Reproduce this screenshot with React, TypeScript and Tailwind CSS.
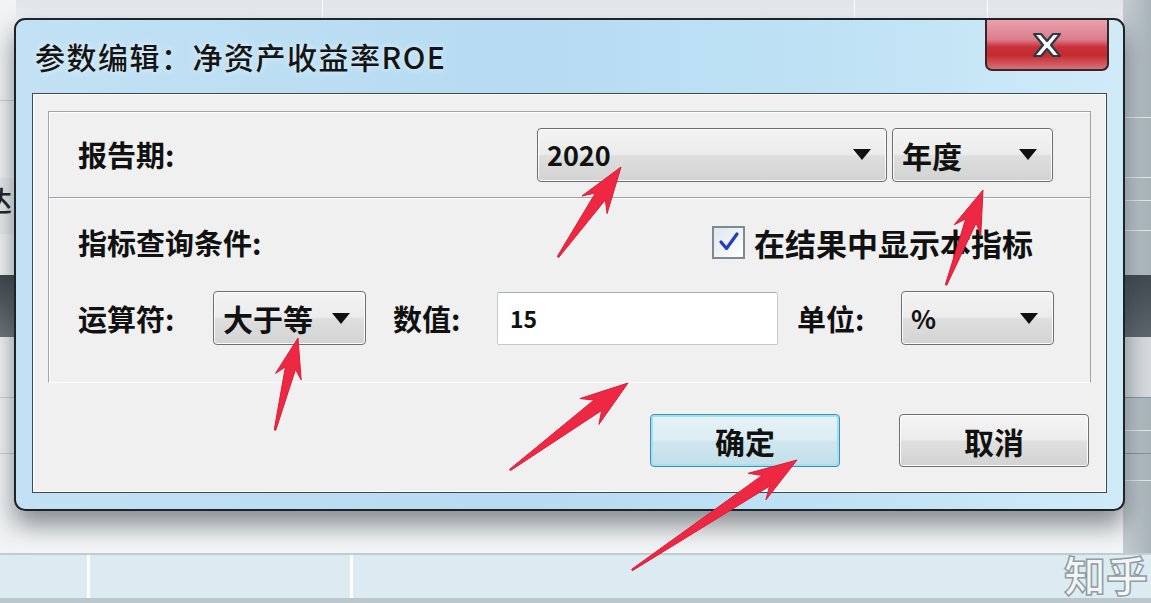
import type { ReactNode } from 'react';

const cjk = "font-['Noto_Sans_CJK_SC','Noto_Sans',sans-serif]";

// Red annotation arrows drawn over the dialog: [tipX, tipY, tailX, tailY]
const arrows: [number, number, number, number][] = [
  [621, 167, 558, 257],
  [983, 190, 946, 285],
  [298, 338, 275, 430],
  [628, 383, 510, 470],
  [797, 460, 632, 570],
];

function arrowPoints([tx, ty, ex, ey]: [number, number, number, number]): string {
  const len = Math.hypot(tx - ex, ty - ey);
  const ux = (tx - ex) / len;
  const uy = (ty - ey) / len;
  const px = -uy;
  const py = ux;
  const at = (d: number, w: number) => `${(tx - ux * d + px * w).toFixed(1)},${(ty - uy * d + py * w).toFixed(1)}`;
  const head = Math.min(48, len * 0.42);
  const barb = Math.min(16, len * 0.14);
  const neck = Math.min(6.5, len * 0.055);
  return [
    at(0, 0),
    at(head, barb),
    at(head * 0.78, neck),
    at(len, 0.8),
    at(len, -0.8),
    at(head * 0.78, -neck),
    at(head, -barb),
  ].join(' ');
}

function Caret() {
  return (
    <svg width="18" height="11" viewBox="0 0 18 11" className="shrink-0">
      <path d="M0 0 H18 L9 11 Z" fill="#111" />
    </svg>
  );
}

function Combo({ value, width, textSize = 'text-[29px]' }: { value: string; width: string; textSize?: string }) {
  return (
    <div
      className={`${width} h-[54px] shrink-0 rounded-[4px] border border-[#6f6f6f] bg-[linear-gradient(#f3f3f3_0%,#ececec_48%,#dedede_52%,#d3d3d3_100%)] shadow-[inset_0_0_0_1px_#fbfbfb] flex items-center justify-between pl-[9px] pr-[15px]`}
    >
      <span className={`${textSize} font-semibold text-[#111] leading-none`}>{value}</span>
      <Caret />
    </div>
  );
}

function Label({ children, width }: { children: ReactNode; width?: string }) {
  return <span className={`${width ?? ''} shrink-0 text-[29px] font-semibold text-[#111] leading-none`}>{children}</span>;
}

function Button({ children, primary }: { children: ReactNode; primary?: boolean }) {
  return (
    <div
      className={`w-[190px] h-[53px] rounded-[4px] border flex items-center justify-center ${
        primary
          ? 'border-[#3f8fb4] bg-[linear-gradient(#e6f3f7_0%,#dcedf3_48%,#cfe6ee_52%,#c3dfe9_100%)] shadow-[inset_0_0_0_2px_#9fe0f2]'
          : 'border-[#707070] bg-[linear-gradient(#f4f4f4_0%,#ececec_48%,#dfdfdf_52%,#d2d2d2_100%)] shadow-[inset_0_0_0_1px_#fcfcfc]'
      }`}
    >
      <span className="text-[30px] font-semibold text-[#111] leading-none">{children}</span>
    </div>
  );
}

function Backdrop() {
  return (
    <>
      {/* top strip of the app behind */}
      <div className="absolute left-0 top-0 w-full h-[20px] bg-[linear-gradient(#dfe5e8,#eef1f3)]">
        <div className="absolute left-[322px] top-0 h-full w-px bg-white" />
        <div className="absolute left-[854px] top-0 h-full w-px bg-white" />
        <div className="absolute left-[987px] top-0 h-full w-px bg-white" />
      </div>
      {/* left strip */}
      <div className="absolute left-0 top-0 w-[16px] h-[553px] bg-[#f1f3f4]">
        <div className="absolute left-0 top-[100px] w-full h-px bg-[#c9d0d4]" />
        <div className="absolute left-0 top-[178px] w-full h-[56px] bg-[#e7ebed]" />
        <span className={`absolute left-[-16px] top-[186px] text-[28px] leading-none font-medium text-[#222] ${cjk}`}>达</span>
        <div className="absolute left-0 top-[275px] w-full h-[62px] bg-[linear-gradient(#3e454a,#6d767c)]" />
        <div className="absolute left-0 top-[397px] w-full h-px bg-[#c9d0d4]" />
        <div className="absolute left-0 top-[453px] w-full h-px bg-[#c9d0d4]" />
      </div>
      {/* right strip */}
      <div className="absolute right-0 top-0 w-[28px] h-[553px] bg-[linear-gradient(90deg,#c3ccd1,#a9b4ba)]">
        <div className="absolute left-0 top-[117px] w-full h-px bg-[#e3e8ea]" />
        <div className="absolute left-0 top-[177px] w-full h-px bg-[#e3e8ea]" />
        <div className="absolute left-0 top-[200px] w-full h-px bg-[#e3e8ea]" />
        <div className="absolute left-0 top-[230px] w-full h-px bg-[#e3e8ea]" />
        <div className="absolute left-0 top-[275px] w-full h-[62px] bg-[linear-gradient(#404a50,#5d676d)]" />
        <div className="absolute left-0 top-[337px] w-full h-[60px] bg-[#d5dbde]" />
        <div className="absolute left-0 top-[397px] w-full h-px bg-[#8a959b]" />
        <div className="absolute left-0 top-[430px] w-full h-px bg-[#e3e8ea]" />
        <div className="absolute left-0 top-[453px] w-full h-px bg-[#8a959b]" />
        <div className="absolute left-0 top-[480px] w-full h-px bg-[#e3e8ea]" />
      </div>
      {/* bottom row of the table */}
      <div className="absolute left-0 top-[553px] w-full h-[45px] border-t-2 border-[#c2cdd2] bg-[#dcebf2]">
        <div className="absolute left-[87px] top-0 h-full w-[3px] bg-white" />
        <div className="absolute left-[350px] top-0 h-full w-[3px] bg-white" />
      </div>
      <div className="absolute left-0 top-[598px] w-full h-[5px] bg-[#bcc7cc]" />
      {/* watermark */}
      <span
        className={`absolute left-[1064px] top-[553px] whitespace-nowrap text-[42px] leading-none font-bold text-[#f3f5f6] [-webkit-text-stroke:1.5px_#8f9ca3] ${cjk}`}
      >
        知乎
      </span>
    </>
  );
}

export default function App() {
  return (
    <div className={`relative w-[1151px] h-[603px] overflow-hidden bg-[#f3f5f6] ${cjk}`}>
      <Backdrop />

      {/* Dialog window */}
      <div className="absolute left-[14px] top-[18px] w-[1111px] h-[493px] rounded-[11px] border-2 border-[#1d2326] bg-[linear-gradient(90deg,#c2e1f4_0%,#b6dbf2_45%,#bfe2f5_75%,#d0ebf8_100%)] shadow-[0_14px_26px_rgba(40,50,56,0.55)] flex flex-col">
        {/* Title bar */}
        <div className="relative h-[73px] shrink-0 flex items-center pl-[19px] pb-[1px]">
          <span className="text-[30px] font-medium tracking-[1.5px] text-[#151515] leading-none [text-shadow:0_0_6px_#e8f6ff]">
            参数编辑：净资产收益率ROE
          </span>
          <div className="absolute right-[14px] top-0 w-[124px] h-[51px] rounded-b-[7px] border-2 border-t-0 border-[#3b2426] bg-[linear-gradient(#eaa0ad_0%,#dc7d8b_40%,#c9303a_55%,#c62b2e_72%,#d4727b_100%)] flex items-center justify-center">
            <svg width="38" height="30" viewBox="0 0 38 30">
              <path
                d="M6 4 L13 4 L19 11 L25 4 L32 4 L23 15 L32 26 L25 26 L19 19 L13 26 L6 26 L15 15 Z"
                fill="#ffffff"
                stroke="#2b3a44"
                strokeWidth="2.2"
                strokeLinejoin="round"
              />
            </svg>
          </div>
        </div>

        {/* Client area */}
        <div className="mx-[16px] mb-[16px] flex-1 border border-[#3e4a52] bg-[#f0f0f0] shadow-[inset_0_0_0_1px_#ffffff] flex flex-col pt-[17px] px-[15px]">
          {/* Group box */}
          <div className="border border-[#9da4a8] border-b-white shadow-[inset_1px_1px_0_#ffffff] flex flex-col">
            <div className="h-[86px] flex items-center pl-[29px] pr-[37px] border-b border-[#9da4a8] shadow-[0_1px_0_#ffffff]">
              <Label>报告期:</Label>
              <div className="ml-auto flex gap-[5px]">
                <Combo value="2020" width="w-[350px]" textSize="text-[27px]" />
                <Combo value="年度" width="w-[161px]" textSize="text-[30px]" />
              </div>
            </div>
            <div className="h-[184px] flex flex-col pl-[29px] pr-[37px]">
              <div className="h-[90px] flex items-center pb-[2px]">
                <Label>指标查询条件:</Label>
                <div className="ml-auto mr-[20px] flex items-center gap-[9px]">
                  <div className="w-[33px] h-[33px] border-2 border-[#7b8a95] bg-[linear-gradient(135deg,#dfe6ee,#ffffff)] flex items-center justify-center">
                    <svg width="22" height="22" viewBox="0 0 22 22">
                      <path d="M3 11 L8.5 17.5 L19 3" fill="none" stroke="#1f3fbf" strokeWidth="3.2" strokeLinecap="round" strokeLinejoin="round" />
                    </svg>
                  </div>
                  <span className="text-[31px] font-semibold text-[#111] leading-none">在结果中显示本指标</span>
                </div>
              </div>
              <div className="h-[60px] flex items-center">
                <Label width="w-[135px]">运算符:</Label>
                <Combo value="大于等" width="w-[153px]" textSize="text-[30px]" />
                <Label width="ml-[27px] w-[104px]">数值:</Label>
                <div className="w-[281px] h-[53px] shrink-0 rounded-[2px] border border-[#c5cace] border-t-[#a9aeb3] bg-white flex items-center pl-[12px]">
                  <span className="text-[23px] font-semibold text-[#111] leading-none">15</span>
                </div>
                <Label width="ml-[19px] w-[104px]">单位:</Label>
                <Combo value="%" width="w-[153px]" textSize="text-[26px]" />
              </div>
            </div>
          </div>

          {/* Buttons */}
          <div className="mt-[31px] flex justify-end gap-[59px] pr-[2px]">
            <Button primary>确定</Button>
            <Button>取消</Button>
          </div>
        </div>
      </div>

      {/* Annotation arrows */}
      <svg className="absolute left-0 top-0 pointer-events-none" width="1151" height="603" viewBox="0 0 1151 603">
        {arrows.map((a, i) => (
          <polygon key={i} points={arrowPoints(a)} fill="#ee2743" stroke="#d81f3a" strokeWidth="1" strokeLinejoin="round" />
        ))}
      </svg>
    </div>
  );
}
